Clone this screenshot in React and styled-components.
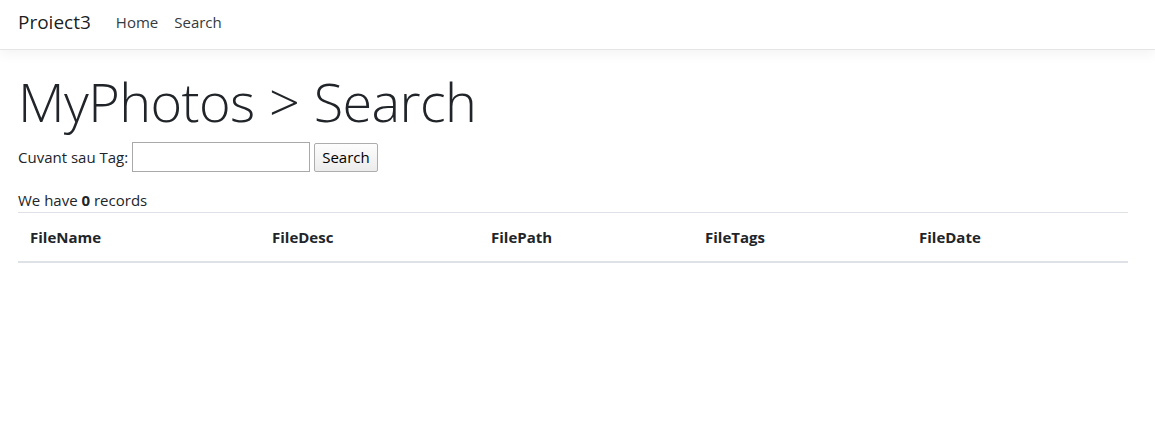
import styled, { createGlobalStyle } from "styled-components";

const baseFont = `"Open Sans", "Noto Sans", "Liberation Sans", sans-serif`;

const columns = [
    { name: "FileName", width: 242 },
    { name: "FileDesc", width: 219 },
    { name: "FilePath", width: 214 },
    { name: "FileTags", width: 214 },
    { name: "FileDate" },
];

function App() {
    return (
        <>
            <GlobalStyle />
            <Navbar>
                <Brand href="#">Proiect3</Brand>
                <NavLink href="#">Home</NavLink>
                <NavLink href="#">Search</NavLink>
            </Navbar>
            <Container>
                <Title>MyPhotos &gt; Search</Title>
                <SearchForm onSubmit={(e) => e.preventDefault()}>
                    <Label htmlFor="q">Cuvant sau Tag:</Label>
                    <TextInput id="q" type="text" />
                    <SearchButton type="submit">Search</SearchButton>
                </SearchForm>
                <Records>
                    We have <b>0</b> records
                </Records>
                <Table>
                    <thead>
                        <tr>
                            {columns.map((c) => (
                                <Th key={c.name} $width={c.width}>
                                    {c.name}
                                </Th>
                            ))}
                        </tr>
                    </thead>
                    <tbody></tbody>
                </Table>
            </Container>
        </>
    );
}

const GlobalStyle = createGlobalStyle`
    body {
        margin: 0;
        font-family: ${baseFont};
        font-size: 15px;
        color: #212529;
        background: #fff;
    }
`;

const Navbar = styled.nav`
    height: 50px;
    display: flex;
    align-items: center;
    padding: 0 18px 5px;
    border-bottom: 1px solid #e5e5e5;
    box-shadow: 0 4px 12px rgba(0, 0, 0, 0.05);
    box-sizing: border-box;
`;

const Brand = styled.a`
    font-size: 19px;
    color: rgba(0, 0, 0, 0.9);
    text-decoration: none;
    margin-right: 25px;
`;

const NavLink = styled.a`
    font-size: 15px;
    color: #343a40;
    text-decoration: none;
    margin-right: 16px;
`;

const Container = styled.main`
    max-width: 1110px;
    padding: 0 18px;
`;

const Title = styled.h1`
    margin: 22px 0 0;
    font-size: 54px;
    font-weight: 300;
    line-height: 1.1;
    letter-spacing: -0.6px;
    word-spacing: 1px;
`;

const SearchForm = styled.form`
    display: flex;
    align-items: center;
    margin-top: 11px;
`;

const Label = styled.label`
    font-size: 15px;
    margin-right: 4px;
`;

const TextInput = styled.input`
    width: 178px;
    height: 30px;
    box-sizing: border-box;
    border: 1px solid #a9a9a9;
    margin-right: 4px;
    font-family: ${baseFont};
`;

const SearchButton = styled.button`
    height: 29px;
    padding: 0 7px;
    font-family: ${baseFont};
    font-size: 15px;
    color: #000;
    background: linear-gradient(#fdfdfd, #ececec);
    border: 1px solid #adadad;
    border-radius: 2px;
`;

const Records = styled.p`
    margin: 17px 0 0;
    font-size: 15px;
    line-height: 22px;
`;

const Table = styled.table`
    width: 100%;
    border-collapse: collapse;
    margin-top: 1px;
`;

const Th = styled.th`
    width: ${(p) => (p.$width ? `${p.$width}px` : "auto")};
    text-align: left;
    font-size: 15px;
    font-weight: 700;
    padding: 12px 12px;
    line-height: 24px;
    border-top: 1px solid #dee2e6;
    border-bottom: 2px solid #dee2e6;
    box-sizing: border-box;
`;

export default App;
